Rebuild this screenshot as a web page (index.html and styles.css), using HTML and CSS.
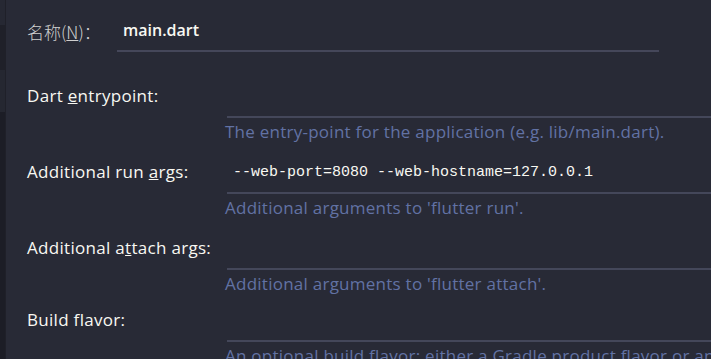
FILE: index.html
```html
<!DOCTYPE html>
<html lang="zh">
<head>
<meta charset="UTF-8">
<meta name="viewport" content="width=device-width, initial-scale=1.0">
<title>Run Configuration</title>
<link rel="stylesheet" href="styles.css">
</head>
<body>
<div class="page">
  <div class="side-strip">
    <div class="strip-a"></div>
    <div class="strip-b"></div>
    <div class="strip-c"></div>
    <div class="strip-d"></div>
  </div>

  <div class="form">
    <div class="name-row">
      <label class="name-label">名称(<u>N</u>)：</label>
      <div class="name-input">main.dart</div>
    </div>

    <div class="field-row">
      <label class="field-label">Dart <u>e</u>ntrypoint:</label>
      <div class="field">
        <div class="field-input"></div>
        <div class="field-help">The entry-point for the application (e.g. lib/main.dart).</div>
      </div>
    </div>

    <div class="field-row">
      <label class="field-label">Additional run <u>a</u>rgs:</label>
      <div class="field">
        <div class="field-input mono">--web-port=8080 --web-hostname=127.0.0.1</div>
        <div class="field-help">Additional arguments to 'flutter run'.</div>
      </div>
    </div>

    <div class="field-row">
      <label class="field-label">Additional a<u>t</u>tach args:</label>
      <div class="field">
        <div class="field-input"></div>
        <div class="field-help">Additional arguments to 'flutter attach'.</div>
      </div>
    </div>

    <div class="field-row last">
      <label class="field-label">Build flavor:</label>
      <div class="field">
        <div class="field-input"></div>
        <div class="field-help">An optional build flavor: either a Gradle product flavor or an Xcode scheme.</div>
      </div>
    </div>
  </div>
</div>
</body>
</html>
```

FILE: styles.css
```css
html, body {
  margin: 0;
  padding: 0;
  height: 100%;
  overflow: hidden;
}
body {
  background-color: #282a36;
  color: #f8f8f2;
  font-family: 'Open Sans', 'Noto Sans CJK SC', sans-serif;
  font-size: 17px;
}
.page {
  display: flex;
  height: 100%;
}
.side-strip {
  width: 5px;
  flex-shrink: 0;
  display: flex;
  flex-direction: column;
  border-right: 1px solid #1f2029;
}
.strip-a { height: 25px; background-color: #262833; }
.strip-b { height: 45px; background-color: #1f2029; }
.strip-c { height: 42px; background-color: #252731; }
.strip-d { flex: 1; background-color: #1c1d26; }

.form {
  flex: 1;
  padding-left: 21px;
  padding-top: 11px;
  overflow: hidden;
}

/* fila del nombre */
.name-row {
  display: flex;
  align-items: center;
  height: 41px;
}
.name-label {
  width: 90px;
  color: #d0d0d0;
  font-family: 'Noto Sans CJK SC', sans-serif;
  font-size: 17px;
  font-weight: 300;
}
.name-input {
  width: 542px;
  height: 41px;
  line-height: 39px;
  padding-left: 6px;
  border-bottom: 2px solid #45475a;
  box-sizing: border-box;
  font-weight: 600;
  font-size: 16px;
}

/* filas de campos */
.field-row {
  display: grid;
  grid-template-columns: 200px 1fr;
  margin-top: 26px;
}
.field-row + .field-row {
  margin-top: 11px;
}
.field-row.last {
  margin-top: 7px;
}
.field-label {
  height: 36px;
  line-height: 36px;
  font-weight: 500;
  letter-spacing: 0.3px;
}
.field {
  min-width: 520px;
}
.field-input {
  height: 40px;
  line-height: 38px;
  border-bottom: 2px solid #44475a;
  box-sizing: border-box;
  padding-left: 6px;
  white-space: nowrap;
}
.mono {
  font-family: 'Liberation Mono', monospace;
  font-size: 15px;
}
.field-help {
  color: #6272a4;
  line-height: 22px;
  padding-top: 3px;
  margin-left: -2px;
  letter-spacing: 0.25px;
  white-space: nowrap;
}
```
